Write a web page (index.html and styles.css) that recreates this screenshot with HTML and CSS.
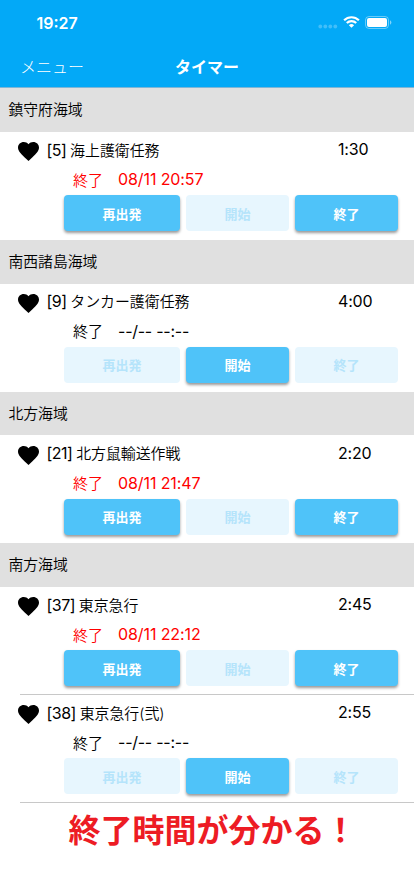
FILE: index.html
```html
<!DOCTYPE html>
<html lang="ja">
<head>
    <meta charset="UTF-8">
    <meta name="viewport" content="width=device-width, initial-scale=1.0">
    <title>タイマー</title>
    <link rel="stylesheet" href="styles.css">
</head>
<body>

<svg class="defs" width="0" height="0">
    <symbol id="heart" viewBox="0 0 20 18">
        <path d="M10 18 L8.5 16.7 C3.4 12 0 9 0 5.3 C0 2.3 2.4 0 5.5 0 C7.2 0 8.9 .8 10 2.1 C11.1 .8 12.8 0 14.5 0 C17.6 0 20 2.3 20 5.3 C20 9 16.6 12 11.5 16.7 Z"/>
    </symbol>
</svg>

<header class="header">
    <div class="status">
        <span class="clock">19:27</span>
        <div class="status-icons">
            <svg class="dots" width="20" height="5" viewBox="0 0 20 5">
                <circle cx="2.3" cy="2.5" r="1.9"/><circle cx="7.3" cy="2.5" r="1.9"/><circle cx="12.3" cy="2.5" r="1.9"/><circle cx="17.3" cy="2.5" r="1.9"/>
            </svg>
            <svg class="wifi" width="17" height="12" viewBox="0 0 17 12">
                <path d="M1.1 4.3 A10.5 10.5 0 0 1 15.9 4.3" />
                <path d="M3.8 7 A6.7 6.7 0 0 1 13.2 7" />
                <path class="wifi-dot" d="M5.9 9.2 A3.9 3.9 0 0 1 11.1 9.2 L8.5 11.8 Z" />
            </svg>
            <svg class="battery" width="27" height="13" viewBox="0 0 27 13">
                <rect class="battery-frame" x=".5" y=".5" width="23" height="12" rx="3.5"/>
                <rect x="2" y="2" width="20" height="9" rx="2"/>
                <path class="battery-tip" d="M25 4.3 Q26.4 5 26.4 6.5 Q26.4 8 25 8.7 Z"/>
            </svg>
        </div>
    </div>
    <nav class="nav">
        <a class="menu">メニュー</a>
        <h1 class="title">タイマー</h1>
    </nav>
</header>

<main>
    <section class="area">
        <h2 class="area-name">鎮守府海域</h2>
        <div class="item">
            <div class="row">
                <svg class="heart"><use href="#heart"/></svg>
                <span class="name"><span class="num">[5]</span> 海上護衛任務</span>
                <span class="time">1:30</span>
            </div>
            <div class="end running">終了<span class="date">08/11 20:57</span></div>
            <div class="buttons">
                <button class="button">再出発</button>
                <button class="button" disabled>開始</button>
                <button class="button">終了</button>
            </div>
        </div>
    </section>

    <section class="area">
        <h2 class="area-name">南西諸島海域</h2>
        <div class="item">
            <div class="row">
                <svg class="heart"><use href="#heart"/></svg>
                <span class="name"><span class="num">[9]</span> タンカー護衛任務</span>
                <span class="time">4:00</span>
            </div>
            <div class="end">終了<span class="date empty">--/-- --:--</span></div>
            <div class="buttons">
                <button class="button" disabled>再出発</button>
                <button class="button">開始</button>
                <button class="button" disabled>終了</button>
            </div>
        </div>
    </section>

    <section class="area">
        <h2 class="area-name">北方海域</h2>
        <div class="item">
            <div class="row">
                <svg class="heart"><use href="#heart"/></svg>
                <span class="name"><span class="num">[21]</span> 北方鼠輸送作戦</span>
                <span class="time">2:20</span>
            </div>
            <div class="end running">終了<span class="date">08/11 21:47</span></div>
            <div class="buttons">
                <button class="button">再出発</button>
                <button class="button" disabled>開始</button>
                <button class="button">終了</button>
            </div>
        </div>
    </section>

    <section class="area">
        <h2 class="area-name">南方海域</h2>
        <div class="item">
            <div class="row">
                <svg class="heart"><use href="#heart"/></svg>
                <span class="name"><span class="num">[37]</span> 東京急行</span>
                <span class="time">2:45</span>
            </div>
            <div class="end running">終了<span class="date">08/11 22:12</span></div>
            <div class="buttons">
                <button class="button">再出発</button>
                <button class="button" disabled>開始</button>
                <button class="button">終了</button>
            </div>
        </div>
        <hr class="line">
        <div class="item">
            <div class="row">
                <svg class="heart"><use href="#heart"/></svg>
                <span class="name"><span class="num">[38]</span> 東京急行(弐)</span>
                <span class="time">2:55</span>
            </div>
            <div class="end">終了<span class="date empty">--/-- --:--</span></div>
            <div class="buttons">
                <button class="button" disabled>再出発</button>
                <button class="button">開始</button>
                <button class="button" disabled>終了</button>
            </div>
        </div>
        <hr class="line">
    </section>
</main>

<p class="caption">終了時間が分かる！</p>

</body>
</html>
```
FILE: styles.css
```css
* {
    box-sizing: border-box;
}
body {
    margin: 0;
    height: 896px;
    overflow: hidden;
    background-color: #ffffff;
    color: #000000;
    font-family: 'Inter', 'Noto Sans CJK JP', sans-serif;
    font-size: 15px;
    font-weight: 350;
}
.defs {
    display: block;
}
.header {
    height: 88.3px;
    background-color: #03a9f7;
    border-bottom: 1px solid #7fb6d6;
    color: #ffffff;
}
.status {
    display: flex;
    justify-content: space-between;
    height: 44px;
    padding: 13px 22px 0 36.5px;
}
.clock {
    font-size: 16px;
    font-weight: 600;
    line-height: 20px;
}
.status-icons {
    display: flex;
    padding-top: 3px;
}
.status-icons svg {
    fill: #ffffff;
}
.status-icons .dots {
    margin: 8px 5px 0 0;
    opacity: 0.25;
}
.status-icons .wifi {
    margin-right: 5px;
    fill: none;
    stroke: #ffffff;
    stroke-width: 2.2;
}
.wifi .wifi-dot {
    fill: #ffffff;
    stroke: none;
}
.battery .battery-frame {
    fill: none;
    stroke: #ffffff;
    opacity: 0.4;
}
.battery-tip {
    opacity: 0.5;
}
.nav {
    display: grid;
    grid-template-columns: 1fr auto 1fr;
    align-items: center;
    height: 44px;
    padding-left: 20px;
    padding-right: 20px;
}
.menu {
    font-size: 16px;
    font-weight: 300;
}
.title {
    margin: 0;
    font-size: 16px;
    font-weight: bold;
}
.area-name {
    margin: 0;
    height: 43.7px;
    padding-left: 8.5px;
    background-color: #e0e0e0;
    font-size: 14.8px;
    font-weight: 350;
    line-height: 44.5px;
}
.item {
    height: 108px;
    padding: 2.3px 16px 0 18px;
}
.row {
    display: flex;
    align-items: center;
    height: 30px;
}
.heart {
    width: 21px;
    height: 19px;
    margin: 5px 7.5px 0 0;
}
.name {
    flex: 1;
    font-size: 14.9px;
    word-spacing: -0.5px;
}
.num {
    font-size: 16px;
    font-weight: 400;
    letter-spacing: -0.5px;
}
.time {
    width: 60px;
    font-size: 16px;
    font-weight: 400;
    letter-spacing: -0.2px;
}
.end {
    display: flex;
    align-items: center;
    height: 30px;
    padding-left: 55px;
}
.date {
    margin-left: 15px;
    font-size: 16px;
    font-weight: 400;
    letter-spacing: -0.1px;
}
.empty {
    letter-spacing: -0.25px;
}
.running {
    color: #ff0000;
}
.buttons {
    display: grid;
    grid-template-columns: 116px 103px 103px;
    justify-content: space-between;
    padding-top: 1px;
    padding-left: 46px;
}
.button {
    height: 36px;
    padding: 0;
    border: none;
    border-radius: 4px;
    background-color: #4fc3f9;
    box-shadow: 0 2px 3px rgba(0, 0, 0, 0.4);
    color: #ffffff;
    font-family: inherit;
    font-size: 13px;
    font-weight: bold;
}
.button:disabled {
    background-color: #e7f6fe;
    box-shadow: none;
    color: #b5e4fb;
}
.line {
    height: 1px;
    margin: -1px 0 0 20px;
    border: none;
    background-color: #c8c8c8;
}
.caption {
    margin: 4px 0 0 68.5px;
    color: #ed1c24;
    font-size: 32px;
    font-weight: bold;
    line-height: 48px;
}
```
